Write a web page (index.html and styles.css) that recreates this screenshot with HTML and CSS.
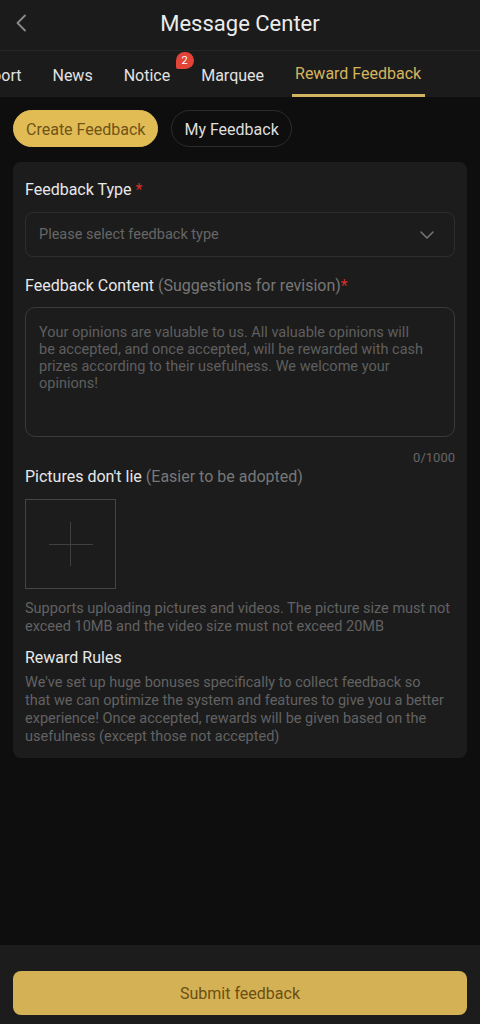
FILE: index.html
```html
<!DOCTYPE html>
<html lang="en">
<head>
<meta charset="utf-8">
<title>Message Center</title>
<link rel="stylesheet" href="styles.css">
</head>
<body>
<div class="page">
  <header class="topbar">
    <span class="back">
      <svg width="14" height="18" viewBox="0 0 14 18"><path d="M11 1.5 L3.5 9 L11 16.5" fill="none" stroke="#8a8a8a" stroke-width="1.8" stroke-linecap="round" stroke-linejoin="round"/></svg>
    </span>
    <h1 class="title">Message Center</h1>
    <span></span>
  </header>

  <nav class="tabs">
    <div class="tab-list">
      <span class="tab first">Support</span>
      <span class="tab">News</span>
      <span class="tab">Notice<span class="badge">2</span></span>
      <span class="tab">Marquee</span>
      <span class="tab active"><span class="tab-label">Reward Feedback</span></span>
    </div>
  </nav>

  <main class="content">
    <div class="pills">
      <span class="pill pill-active">Create Feedback</span>
      <span class="pill">My Feedback</span>
    </div>

    <section class="card">
      <div class="label">Feedback Type <span class="req">*</span></div>
      <div class="select">
        <span class="placeholder">Please select feedback type</span>
        <svg width="16" height="10" viewBox="0 0 16 10"><path d="M2 2 L8 8 L14 2" fill="none" stroke="#777" stroke-width="1.5" stroke-linecap="round" stroke-linejoin="round"/></svg>
      </div>

      <div class="label label-gap">Feedback Content <span class="sub">(Suggestions for revision)</span><span class="req">*</span></div>
      <div class="textarea">Your opinions are valuable to us. All valuable opinions will be accepted, and once accepted, will be rewarded with cash prizes according to their usefulness. We welcome your opinions!</div>
      <div class="counter">0/1000</div>

      <div class="label label-pics">Pictures don't lie <span class="sub">(Easier to be adopted)</span></div>
      <div class="upload"><span class="plus"></span></div>
      <p class="hint">Supports uploading pictures and videos. The picture size must not exceed 10MB and the video size must not exceed 20MB</p>

      <div class="label label-rules">Reward Rules</div>
      <p class="rules">We've set up huge bonuses specifically to collect feedback so that we can optimize the system and features to give you a better experience! Once accepted, rewards will be given based on the usefulness (except those not accepted)</p>
    </section>
  </main>

  <footer class="footer">
    <button class="submit">Submit feedback</button>
  </footer>
</div>
</body>
</html>
```

FILE: styles.css
```css
* { box-sizing: border-box; }
html, body { margin: 0; padding: 0; }
body {
  background: #0e0e0e;
  font-family: Roboto, "Noto Sans", "Liberation Sans", sans-serif;
  color: #e6e6e6;
}
.page {
  width: 480px;
  height: 1024px;
  display: flex;
  flex-direction: column;
  overflow: hidden;
}
.topbar {
  height: 51px;
  background: #1b1b1b;
  border-bottom: 1px solid #262626;
  display: grid;
  grid-template-columns: 60px 1fr 60px;
  align-items: center;
  padding-bottom: 4px;
}
.back { display: flex; padding-left: 14px; }
.title {
  margin: 0;
  text-align: center;
  font-weight: 400;
  font-size: 22px;
  color: #ececec;
}
.tabs {
  height: 46px;
  background: #1b1b1b;
  overflow: hidden;
}
.tab-list {
  display: flex;
  height: 100%;
  margin-left: -50.5px;
  white-space: nowrap;
}
.tab {
  position: relative;
  padding: 2px 15.5px 0;
  height: 100%;
  display: flex;
  align-items: center;
  font-size: 16px;
  color: #e2e2e2;
}
.tab.active { padding: 0 12px; }
.tab-label {
  height: 100%;
  display: flex;
  align-items: center;
  padding: 2px 3.5px 0;
  color: #d6b45e;
  border-bottom: 3px solid #d2b35f;
}
.badge {
  position: absolute;
  right: -8px;
  top: 1px;
  width: 18px;
  height: 17px;
  border-radius: 9px 9px 9px 2px;
  background: #e24538;
  color: #fff;
  font-size: 11px;
  display: flex;
  align-items: center;
  justify-content: center;
}
.content {
  flex: 1;
  padding: 13px 13px 0;
}
.pills {
  display: flex;
  gap: 13px;
}
.pill {
  height: 37px;
  padding: 1px 12px 0;
  border-radius: 19px;
  border: 1px solid #2c2c2c;
  display: flex;
  align-items: center;
  font-size: 16px;
  color: #dedede;
}
.pill-active {
  background: #e1bc55;
  border-color: #e1bc55;
  color: #6f5418;
}
.card {
  margin-top: 15px;
  background: #1c1c1c;
  border-radius: 8px;
  padding: 17px 12px 12px;
}
.label {
  font-size: 16px;
  line-height: 22px;
  color: #e8e8e8;
}
.req { color: #d3302b; }
.sub { color: #777; }
.select {
  margin-top: 11px;
  height: 45px;
  border: 1px solid #2e2e2e;
  border-radius: 8px;
  display: flex;
  align-items: center;
  justify-content: space-between;
  padding: 0 19px 0 13px;
}
.placeholder { font-size: 14.5px; color: #666; }
.label-gap { margin-top: 18px; }
.textarea {
  margin-top: 10px;
  height: 130px;
  border: 1px solid #3a3a3a;
  border-radius: 10px;
  padding: 16px 28px 15px 13px;
  font-size: 14.5px;
  line-height: 17px;
  color: #5f5f5f;
}
.counter {
  margin-top: 13px;
  text-align: right;
  font-size: 13px;
  line-height: 16px;
  color: #666;
}
.label-pics { margin-top: 0; }
.upload {
  margin-top: 11px;
  width: 91px;
  height: 90px;
  border: 1px solid #444;
  display: flex;
  align-items: center;
  justify-content: center;
}
.plus {
  width: 44px;
  height: 44px;
  background:
    linear-gradient(#404040, #404040) center / 44px 1px no-repeat,
    linear-gradient(#404040, #404040) center / 1px 44px no-repeat;
}
.hint, .rules {
  margin: 11px 0 0;
  font-size: 14.5px;
  line-height: 18px;
  color: #626262;
}
.label-rules { margin-top: 11px; font-size: 16px; }
.rules { margin-top: 5px; margin-right: 10px; }
.footer {
  height: 79px;
  background: #1c1c1c;
  padding: 26px 13px 0;
}
.submit {
  width: 100%;
  height: 44px;
  border: none;
  border-radius: 8px;
  background: #d4b154;
  color: #6b4f12;
  font-family: inherit;
  font-size: 16px;
}
```
